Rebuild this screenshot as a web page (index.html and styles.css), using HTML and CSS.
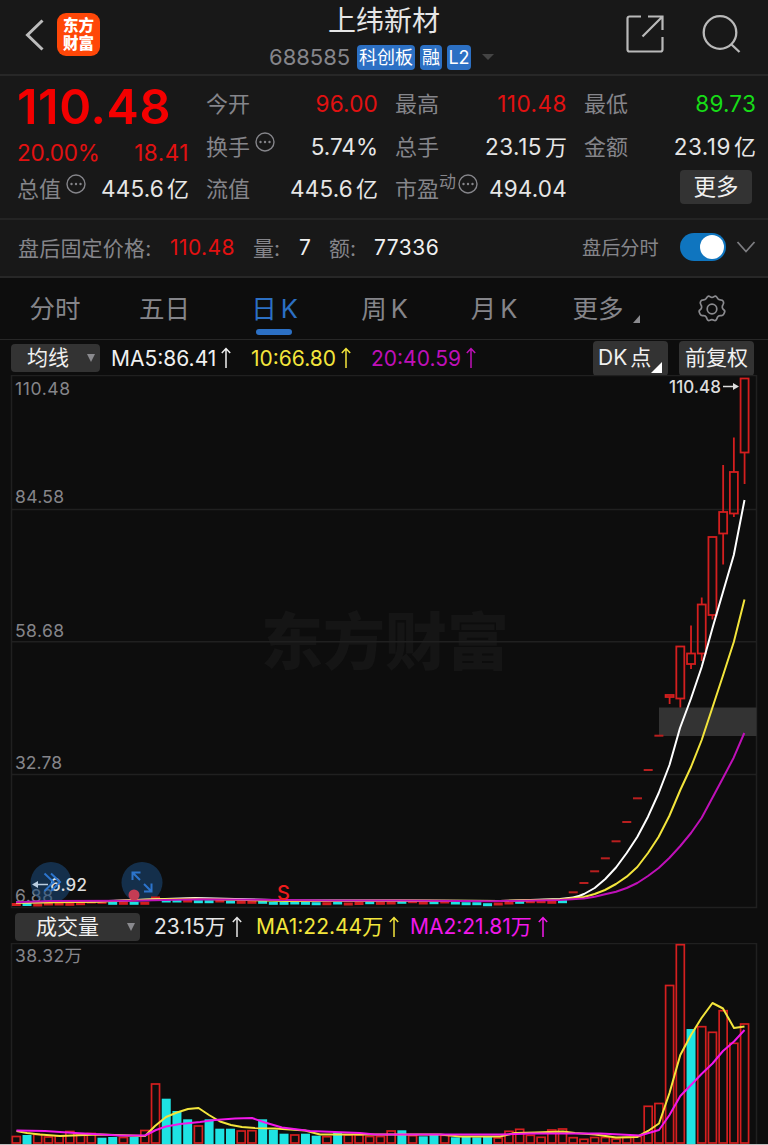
FILE: index.html
```
<!DOCTYPE html>
<html lang="zh-CN">
<head>
    <meta charset="UTF-8">
    <meta name="viewport" content="width=device-width, initial-scale=1.0">
    <title>上纬新材 688585</title>
    <link rel="stylesheet" href="styles.css">
</head>
<body>
    <svg width="0" height="0" class="defs">
        <symbol id="up" viewBox="0 0 10 22"><path d="M5 21V1.5M.8 6 5 1.5 9.2 6" fill="none" stroke="currentColor" stroke-width="1.5"/></symbol>
        <symbol id="dots" viewBox="0 0 20 20"><circle cx="10" cy="10" r="9" fill="none" stroke="currentColor" stroke-width="1.4"/><circle cx="5.5" cy="10" r="1.2" fill="currentColor"/><circle cx="10" cy="10" r="1.2" fill="currentColor"/><circle cx="14.5" cy="10" r="1.2" fill="currentColor"/></symbol>
    </svg>

    <header class="header">
        <div class="header-left">
            <svg class="back" width="20" height="34" viewBox="0 0 20 34"><path d="M17.5 2.5 2.5 17l15 14.5" fill="none" stroke="#bcbcbc" stroke-width="3"/></svg>
            <div class="logo"><span>东方</span><span>财富</span></div>
        </div>
        <div class="title">
            <h1>上纬新材</h1>
            <div class="subtitle">
                <span class="code">688585</span>
                <span class="tag tag-board">科创板</span>
                <span class="tag tag-margin">融</span>
                <span class="tag tag-level">L2</span>
                <i class="caret"></i>
            </div>
        </div>
        <div class="header-right">
            <svg width="40" height="40" viewBox="0 0 40 40" fill="none" stroke="#b9b9b9" stroke-width="2.2"><path d="M16 2.5H4.500a2 2 0 0 0-2 2v31a2 2 0 0 0 2 2h31a2 2 0 0 0 2-2V23M23 2.5h14.500V16M37.500 2.5 17.500 22.5"/></svg>
            <svg width="40" height="40" viewBox="0 0 40 40" fill="none" stroke="#b9b9b9" stroke-width="2.3"><circle cx="18" cy="18.5" r="16.3"/><path d="m29.500 30.5 8 7.5"/></svg>
        </div>
    </header>

    <section class="quote">
        <div class="col">
            <div class="price">110.48</div>
            <div class="cell change"><span class="pct">20.00%</span><span class="diff">18.41</span></div>
            <div class="cell"><label>总值<svg class="dots"><use href="#dots"/></svg></label><b>445.6<em>亿</em></b></div>
        </div>
        <div class="col">
            <div class="cell"><label>今开</label><b class="red">96.00</b></div>
            <div class="cell"><label>换手<svg class="dots"><use href="#dots"/></svg></label><b class="rate">5.74%</b></div>
            <div class="cell"><label>流值</label><b>445.6<em>亿</em></b></div>
        </div>
        <div class="col">
            <div class="cell"><label>最高</label><b class="red wide">110.48</b></div>
            <div class="cell"><label>总手</label><b class="wide">23.15<em>万</em></b></div>
            <div class="cell"><label>市盈<sup>动</sup><svg class="dots tight"><use href="#dots"/></svg></label><b>494.04</b></div>
        </div>
        <div class="col">
            <div class="cell"><label>最低</label><b class="green">89.73</b></div>
            <div class="cell"><label>金额</label><b class="wide">23.19<em>亿</em></b></div>
            <div class="cell end"><button class="more">更多</button></div>
        </div>
    </section>

    <section class="after">
        <span class="after-label">盘后固定价格:</span>
        <span class="after-price">110.48</span>
        <span class="after-vol">量:</span>
        <span class="after-num n1">7</span>
        <span class="after-amt">额:</span>
        <span class="after-num n2">77336</span>
        <span class="after-time">盘后分时</span>
        <span class="switch"></span>
        <svg width="20" height="14" viewBox="0 0 20 14"><path d="m1.500 2 8.500 9.500L18.500 2" fill="none" stroke="#7d7d81" stroke-width="1.8"/></svg>
    </section>

    <nav class="tabs">
        <span>分时</span>
        <span>五日</span>
        <span class="active">日<i>K</i></span>
        <span>周<i>K</i></span>
        <span>月<i>K</i></span>
        <span class="tab-more">更多<svg class="corner" width="7" height="8" viewBox="0 0 7 8"><path d="M7 0v8H0z" fill="#8a8a8e"/></svg></span>
        <span><svg width="30" height="30" viewBox="0 0 30 30" fill="none" stroke="#8a8a8e" stroke-width="1.7"><circle cx="15" cy="15" r="4.8"/><path d="M10.200 3.100Q11.400 1.300 13 2.600q2 1.600 4 0 1.600-1.300 2.800.5l1.100 1.700q.8 1.100 2.300 1.100 2.400 0 3.100 1.500 .8 1.600-.2 3.100-1.100 1.500-.8 3.100 .2 1.300 1.400 2.100 1.700 1.100.7 3l-.7 1.500q-1 1.800-3 1.400-2.200-.300-3.200 1.600-.5 1.200-1 2.300-.9 1.600-2.600.700-2-1.100-4 0-1.700.900-2.600-.7-.500-1.100-1-2.300-1-1.900-3.200-1.600-2 .4-3-1.400l-.6-1.500q-1-1.900.7-3 1.200-.8 1.400-2.100.3-1.600-.8-3.100-1-1.500-.2-3.100.7-1.500 3.100-1.500 1.500 0 2.300-1.100z" stroke-linejoin="round"/></svg></span>
    </nav>

    <div class="indicators">
        <button class="select select-ma">均线<i></i></button>
        <span class="ma5">MA5:86.41<svg class="up"><use href="#up"/></svg></span>
        <span class="ma10">10:66.80<svg class="up"><use href="#up"/></svg></span>
        <span class="ma20">20:40.59<svg class="up"><use href="#up"/></svg></span>
        <div class="tools">
            <button class="dk">DK<em>点</em><svg width="11" height="11" viewBox="0 0 11 11"><path d="M11 0v11H0z" fill="#fff"/></svg></button>
            <button class="adjust">前复权</button>
        </div>
    </div>

    <svg class="chart" id="price" width="768" height="534" viewBox="0 375 768 534">
        <text class="watermark" x="385" y="665" text-anchor="middle">东方财富</text>
        <path class="grid" d="M11.500 375.500h745v532h-745zM12 509.500h744M12 641.800h744M12 774.500h744"/>
        <rect x="659" y="707.5" width="97.5" height="28.5" fill="#333"/>
        <g class="axis">
            <text x="15" y="395" textLength="55">110.48</text>
            <text x="15" y="503" textLength="49">84.58</text>
            <text x="15" y="636.5" textLength="49">58.68</text>
            <text x="15" y="768.5" textLength="47">32.78</text>
            <text x="15" y="902" textLength="38">6.88</text>
        </g>
        <g fill="#1c4c80" fill-opacity=".55"><circle cx="51" cy="882.5" r="20.5"/><circle cx="142" cy="882.5" r="20.5"/></g>
        <g id="candles"></g>
        <path class="line ma5" d="M16 902.500 95 901.500 150 899.500 195 898 235 899 290 900.500H400L500 901 560 899Q567 898.500 573 897.500 579 896.500 584 894L594.700 888 605.300 879 616 867.500 626.700 853 637.400 836.700 648 816.700 658.700 793 669.500 765 680 728 691 698.500 701.700 667 712.500 628 723 592 733.800 555 744.500 500"/>
        <path class="line ma10" d="M16 902.700 95 901.700 150 899.500 195 898.700 235 899.700 290 901 400 900.500 500 901 560 899.500 584 897 594.700 894 605 890 616 884 626.700 876.700 637.300 867 648 853 658.700 836.700 669.300 816 680.300 790 691 767 701.700 740 712.300 708 723 675.500 733.800 642 744.500 599.500"/>
        <path class="line ma20" d="M16 902.300 50 901 130 900.700 200 899.300 260 899.700 330 900.500H400L490 901.200 560 900 584 898.500 594.700 896.700 605 894.300 616 891.700 626.700 888 637.300 883 648 876 658.700 868 669.300 858 680.300 846 691 833 701.700 817.700 712.300 798 723 778 733.700 757.700 744.300 733"/>
        <text class="peak" x="669" y="392.5" textLength="52">110.48</text>
        <path d="M723 386.500h12" stroke="#ddd" stroke-width="1.5"/><path d="m733 383 6 3.500-6 3.500z" fill="#ddd"/>
        <text class="peak" x="50" y="890.5" textLength="37">6.92</text>
        <path d="M36 884.500h12" stroke="#b9cde0" stroke-width="1.5"/><path d="m38 881-6 3.500 6 3.500z" fill="#b9cde0"/>
        <text class="sell" x="277" y="900">S</text>
        <circle cx="134" cy="895" r="5.5" fill="#c53c54"/>
        <path d="m44.500 873.500 9 8.500-9 9M51 873.500l9 8.500-9 9" fill="none" stroke="#2c74cc" stroke-width="2"/>
        <path d="M132.500 880v-7.500h8M133 873l7 7M151.500 883.500v8H144M151 891l-7-7" fill="none" stroke="#2c74cc" stroke-width="2"/>
    </svg>

    <div class="indicators volume-row">
        <button class="select select-vol">成交量<i></i></button>
        <span class="vol">23.15万<svg class="up"><use href="#up"/></svg></span>
        <span class="vol-ma1">MA1:22.44万<svg class="up"><use href="#up"/></svg></span>
        <span class="vol-ma2">MA2:21.81万<svg class="up"><use href="#up"/></svg></span>
    </div>

    <svg class="chart" id="volume" width="768" height="202" viewBox="0 943 768 202">
        <path class="grid" d="M11.500 1145V943.500h745V1145"/>
        <g class="axis"><text x="15" y="961.5" textLength="67">38.32万</text></g>
        <g id="bars"></g>
        <path class="line vma1" d="M16.500 1131 27 1133 40 1134.500 60 1136 85 1135 100 1134.500 145 1136 155 1126 166 1117 177 1112.500 188 1109 198.500 1108 209 1115 220 1121.500 231 1125 242 1127 255 1128 275 1128.500 305 1130.500 320 1134.500 380 1134.500 440 1134.500 460 1136.500 500 1136.500 515 1133 535 1132.500 563 1131.500 575 1133 595 1134.500 616 1137.500 637 1137 648 1131 659 1123.500 669.500 1093 680.300 1055 691 1035 701.500 1018 712.500 1003 723 1008.500 734 1028 744.500 1026.500"/>
        <path class="line vma2" d="M16.500 1130.500 45 1131 75 1133 120 1135.500 145 1135.500 156 1130 166 1126.500 180 1124 200 1122 215 1120 235 1118.500 252 1118 265 1122.500 282 1127.500 310 1131 360 1133 375 1134.500 500 1134.500 530 1133.500 600 1133.500 640 1135.500 659 1130 669.500 1115 680.300 1096 691 1085 701.500 1074 712.500 1063.500 723 1051 734 1041.500 744.500 1030"/>
        <path d="M0 1144.500h768" stroke="#bdbdbd"/>
    </svg>

    <script src="chart.js"></script>
</body>
</html>
```
FILE: styles.css
```
* {
    box-sizing: border-box;
}
body {
    margin: 0;
    width: 768px;
    height: 1145px;
    overflow: hidden;
    background-color: #0d0d0d;
    color: #e6e6e6;
    font-family: Inter, "Noto Sans CJK SC", sans-serif;
}
em, i {
    font-style: normal;
}
button {
    font-family: inherit;
    color: #f0f0f0;
    background-color: #333;
    border: none;
    border-radius: 4px;
    padding: 0;
}
.defs {
    display: block;
}

/* header */
.header {
    display: grid;
    grid-template-columns: 1fr 230px 1fr;
    height: 76px;
    background-color: #181818;
    border-bottom: 2px solid #272727;
}
.header-left {
    display: flex;
    align-items: flex-start;
    padding: 13px 0 0 25px;
}
.back {
    margin-top: 5px;
}
.logo {
    display: flex;
    flex-direction: column;
    justify-content: center;
    align-items: center;
    width: 43px;
    height: 43px;
    margin-left: 12px;
    border-radius: 9px;
    background-color: #ff4708;
    color: #fff;
    font-size: 15.5px;
    font-weight: 900;
    line-height: 18px;
}
.title {
    text-align: center;
}
.title h1 {
    margin: 3px 0 0;
    font-size: 28px;
    font-weight: 400;
    line-height: 37px;
}
.subtitle {
    display: flex;
    align-items: center;
    height: 26px;
    margin-top: 4px;
}
.code {
    width: 88px;
    text-align: left;
    font-size: 22px;
    color: #85858a;
}
.tag {
    height: 25px;
    margin-right: 5px;
    border-radius: 4px;
    background-color: #2c70c4;
    color: #fff;
    font-size: 18px;
    line-height: 26px;
}
.tag-board {
    width: 58px;
}
.tag-margin {
    width: 22px;
}
.tag-level {
    width: 24px;
}
.caret {
    margin-left: 6px;
    border: 6px solid transparent;
    border-top-color: #444;
    border-bottom: none;
}
.header-right {
    display: flex;
    justify-content: flex-end;
    gap: 37px;
    padding: 14px 26px 0 0;
}

/* quote */
.quote {
    display: grid;
    grid-template-columns: repeat(4, 172px);
    column-gap: 17px;
    height: 144px;
    padding: 6px 0 0 17px;
    background-color: #181818;
    border-bottom: 2px solid #242424;
}
.cell {
    display: flex;
    justify-content: space-between;
    align-items: center;
    height: 42.5px;
    font-size: 22.5px;
    white-space: nowrap;
}
.cell label {
    display: flex;
    align-items: center;
    margin-top: -2px;
    font-size: 22px;
    color: #85858a;
}
.cell b {
    margin-top: 2px;
    font-weight: 400;
    letter-spacing: 0.2px;
    line-height: 30px;
}
.cell b.wide {
    letter-spacing: 0.5px;
}
.cell em {
    margin-left: 3px;
    font-size: 22px;
    letter-spacing: 0;
}
.cell .rate {
    letter-spacing: 0;
}
.cell sup {
    font-size: 17px;
    line-height: 17px;
    margin-top: -10px;
}
.cell.end {
    justify-content: flex-end;
    padding-right: 4px;
}
.dots {
    width: 20px;
    height: 20px;
    margin: -6px 0 0 5px;
}
.dots.tight {
    margin-left: 2px;
}
.price {
    height: 50px;
    font-size: 48.5px;
    font-weight: 600;
    line-height: 50px;
    letter-spacing: 0.6px;
    color: #f40000;
}
.change {
    height: 35px;
    padding-top: 6px;
    color: #e21111;
}
.pct {
    letter-spacing: -0.2px;
}
.diff {
    letter-spacing: 0.5px;
}
.red {
    color: #e21111;
}
.green {
    color: #17dc17;
}
.more {
    width: 72px;
    height: 34px;
    margin-top: -3px;
    font-size: 22.5px;
    line-height: 33px;
}

/* after-hours */
.after {
    display: flex;
    align-items: center;
    height: 58px;
    padding: 0 12px 2px 18px;
    background-color: #181818;
    border-bottom: 2px solid #272727;
    font-size: 21px;
    color: #85858a;
    white-space: nowrap;
}
.after-label {
    width: 152px;
    letter-spacing: 0.2px;
}
.after-price {
    width: 83px;
    color: #e21111;
    letter-spacing: 0.4px;
}
.after-vol {
    width: 46px;
}
.after-num {
    color: #f0f0f0;
}
.n1 {
    width: 30px;
}
.after-amt {
    width: 45px;
}
.n2 {
    width: 208px;
    letter-spacing: 0.5px;
}
.after-time {
    width: 98px;
    font-size: 19.2px;
}
.switch {
    width: 46px;
    height: 28px;
    margin-right: 10px;
    padding: 2px;
    border-radius: 14px;
    background-color: #0f75bf;
}
.switch::after {
    content: "";
    display: block;
    width: 24px;
    height: 24px;
    margin-left: auto;
    border-radius: 50%;
    background-color: #fff;
}

/* tabs */
.tabs {
    display: grid;
    grid-template-columns: 110px 109px 111px 109px 110px 114px 98px;
    height: 62px;
    border-bottom: 1px solid #272727;
    font-size: 25.5px;
    line-height: 60px;
    color: #85858a;
    text-align: center;
}
.tabs span {
    display: flex;
    justify-content: center;
    align-items: center;
    height: 62px;
}
.tabs i {
    margin-left: 4px;
}
.tabs .active {
    position: relative;
    color: #2c70c4;
}
.tabs .active::after {
    content: "";
    position: absolute;
    left: 37px;
    bottom: 5px;
    width: 36px;
    height: 6px;
    border-radius: 3px;
    background-color: #2c70c4;
}
.corner {
    margin: 20px 0 0 9px;
}

/* indicator rows */
.indicators {
    display: flex;
    align-items: center;
    height: 35px;
    padding: 1px 14px 0 11px;
    font-size: 21px;
    white-space: nowrap;
}
.indicators > span {
    display: flex;
    align-items: center;
}
.up {
    width: 10px;
    height: 22px;
    margin-left: 5px;
}
.select {
    display: flex;
    align-items: center;
    justify-content: space-between;
    height: 28px;
    padding: 0 5px 0 16px;
    font-size: 21px;
    line-height: 28px;
}
.select i {
    border: 4px solid transparent;
    border-top: 8px solid #8a8a8e;
    border-bottom: none;
}
.select-ma {
    width: 89px;
}
.ma5 {
    width: 140px;
    margin-left: 11px;
    color: #f0f0f0;
}
.ma10 {
    width: 120px;
    color: #f3e53c;
}
.ma20 {
    color: #bf10b8;
}
.tools {
    display: flex;
    gap: 11px;
    margin-left: auto;
}
.tools button {
    width: 75px;
    height: 35px;
    font-size: 21px;
    line-height: 34px;
}
.tools .dk {
    display: flex;
    align-items: center;
    padding-left: 5px;
}
.dk em {
    margin-left: 3px;
}
.dk svg {
    margin-top: 18px;
}
.volume-row {
    height: 34px;
    padding: 1px 0 0 15px;
}
.volume-row > span {
    line-height: 30px;
}
.select-vol {
    width: 125px;
    padding-left: 21px;
}
.vol {
    width: 102px;
    margin-left: 14px;
}
.vol-ma1 {
    width: 154px;
    color: #f3e53c;
}
.vol-ma2 {
    color: #f218ea;
}
.volume-row .up {
    margin-left: 6px;
}

/* charts */
.chart {
    display: block;
}
.grid {
    fill: none;
    stroke: #202020;
    stroke-width: 1.5;
}
.watermark {
    font-size: 62px;
    font-weight: 900;
    fill: #151515;
}
.axis {
    font-size: 17.5px;
    fill: #85858a;
}
.peak {
    font-size: 17px;
    font-weight: 500;
    fill: #ddd;
}
.sell {
    font-size: 20px;
    font-weight: 500;
    fill: #ee1c1c;
}
.line {
    fill: none;
    stroke-width: 2;
    stroke-linejoin: round;
}
.line.ma5 {
    stroke: #fff;
}
.line.ma10, .line.vma1 {
    stroke: #f3e53c;
}
.line.ma20 {
    stroke: #bf10b8;
}
.line.vma2 {
    stroke: #f218ea;
}
```
FILE: chart.js
```
const RED = '#d41f1f';
const CYAN = '#1ee3e3';
const STEP = 10.71;
const START = 16.3;
const BASE = 1144;

const x = i => START + i * STEP;

function draw(parent, tag, attrs) {
    const el = document.createElementNS('http://www.w3.org/2000/svg', tag);
    for (const key in attrs) el.setAttribute(key, attrs[key]);
    parent.appendChild(el);
}

// flat sessions before the rally, r = up, c = down
const flat = [904.5, 904.5, 905, 904, 904, 904.3, 903.7, 902, 902.3, 903.3, 903.3, 903.3, 903.3, 898, 901, 901, 901,
    901.7, 901.7, 901, 902, 902.3, 902.3, 902.3, 903.3, 903.3, 903, 903.3, 903.7, 903.7, 903, 904, 903.5, 902.7, 903.3,
    903, 902.3, 901.7, 903, 902.7, 902, 903, 903.7, 903.7, 904.7, 904, 903, 902.3, 901.7, 901.7, 902.3, 901.7];
const flatColor = 'rcrrrrrrrcrcrrccrccrcrrccccccrcrrcrrcrrcrccccrrcrrrc';

// limit-up sessions with a single price
const limits = [892.3, 883, 871.3, 858.3, 841.3, 822, 798.3, 770, 735.7];

// high, top, bottom, low
const candles = [
    [695, 695, 697, 704],
    [646.5, 646.5, 698.5, 707.5],
    [625.5, 653.5, 664, 669],
    [597.5, 604.5, 653.5, 661],
    [537, 537, 615, 619.5],
    [465, 512, 533.5, 564.5],
    [437.5, 472, 513.5, 517],
    [378.5, 378.5, 452.5, 484]
];

const volumes = [1136.5, 1135, 1134.5, 1137, 1136, 1131.5, 1135, 1133.5, 1137.7, 1137, 1137.5, 1137, 1130.5, 1084, 1098.7,
    1111, 1119.3, 1126, 1119.3, 1128.7, 1128.7, 1131, 1130.7, 1119.3, 1129.7, 1133.7, 1135, 1133.7, 1135.7, 1136.7, 1132.3,
    1135, 1135, 1136.5, 1136.5, 1131, 1130.3, 1135.7, 1136.3, 1135, 1135.3, 1137.3, 1136.7, 1137.3, 1137, 1138, 1131.3, 1129.3,
    1135.3, 1137.3, 1130, 1129, 1137.7, 1139.3, 1137.5, 1137.5, 1139, 1137.5, 1136.5, 1106.3, 1103.5, 985.5, 944.7, 1029,
    1026.7, 1032.3, 1010.7, 1043.3, 1024];
const down = [1, 8, 9, 11, 14, 15, 16, 18, 19, 20, 23, 24, 25, 27, 28, 30, 36, 38, 39, 41, 42, 43, 44, 63];

const candleLayer = document.getElementById('candles');
const barLayer = document.getElementById('bars');

flat.forEach((y, i) => {
    draw(candleLayer, 'rect', { x: x(i) - 4.5, y: y - 1.5, width: 9, height: 3, fill: flatColor[i] === 'c' ? CYAN : RED });
});

limits.forEach((y, i) => {
    draw(candleLayer, 'rect', { x: x(52 + i) - 4.5, y: y - 1, width: 9, height: 2, fill: '#b81f1f' });
});

candles.forEach(([high, top, bottom, low], i) => {
    const cx = x(61 + i);
    draw(candleLayer, 'path', { d: `M${cx} ${high}V${top}M${cx} ${bottom}V${low}`, stroke: RED, 'stroke-width': 1.8 });
    draw(candleLayer, 'rect', { x: cx - 4, y: top, width: 8, height: bottom - top, fill: 'none', stroke: RED, 'stroke-width': 1.8 });
});

volumes.forEach((y, i) => {
    if (down.includes(i)) {
        draw(barLayer, 'rect', { x: x(i) - 4.5, y: y, width: 9, height: BASE - y, fill: CYAN });
    } else {
        draw(barLayer, 'rect', { x: x(i) - 4, y: y, width: 8, height: BASE - 1 - y, fill: 'none', stroke: RED, 'stroke-width': 1.7 });
    }
});
```
